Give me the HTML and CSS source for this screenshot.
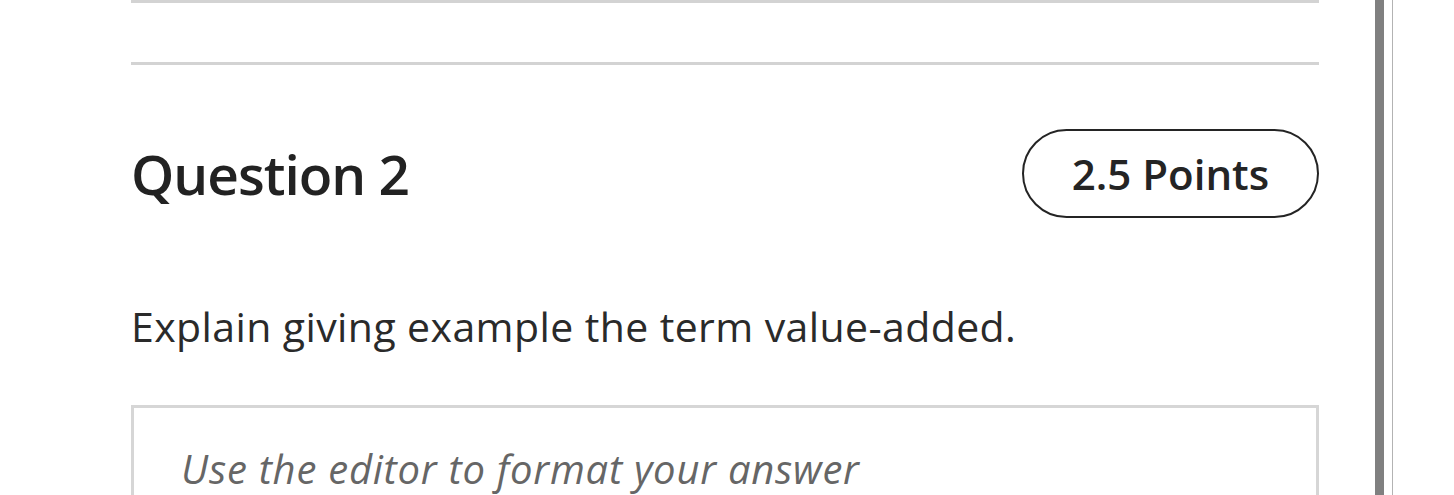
FILE: index.html
```html
<!DOCTYPE html>
<html lang="en">
<head>
<meta charset="utf-8">
<title>Question 2</title>
<link rel="stylesheet" href="styles.css">
</head>
<body>
<div class="page">
  <main class="quiz">
    <hr class="rule rule-top">
    <hr class="rule rule-section">
    <section class="question">
      <header class="question-header">
        <h2 class="question-title">Question 2</h2>
        <span class="points-pill">2.5 Points</span>
      </header>
      <p class="question-prompt">Explain giving example the term value-added.</p>
      <div class="answer-editor">
        <p class="answer-placeholder">Use the editor to format your answer</p>
      </div>
    </section>
  </main>
  <div class="scroll-track"></div>
  <div class="pane-edge"></div>
</div>
</body>
</html>
```

FILE: styles.css
```css
html, body {
  margin: 0;
  padding: 0;
  background: #ffffff;
  height: 100%;
  overflow: hidden;
}

body {
  font-family: "Open Sans", "Noto Sans", sans-serif;
  color: #262626;
}

.page {
  display: flex;
  align-items: stretch;
  min-height: 100vh;
}

.quiz {
  margin-left: 131px;
  width: 1188px;
  flex: 0 0 auto;
}

.rule {
  margin: 0;
  border: 0;
  height: 3px;
  background: #d3d3d3;
}

.rule-section {
  margin-top: 59px;
}

.question-header {
  margin-top: 64px;
  display: flex;
  align-items: center;
  justify-content: space-between;
}

.question-title {
  margin: 0;
  font-size: 55px;
  font-weight: 600;
  letter-spacing: -1px;
  color: #222222;
  line-height: normal;
}

.points-pill {
  box-sizing: border-box;
  height: 89px;
  width: 297px;
  border: 2px solid #242424;
  border-radius: 45px;
  display: flex;
  align-items: center;
  justify-content: center;
  font-size: 42px;
  font-weight: 600;
  color: #242424;
}

.question-prompt {
  margin: 80px 0 0;
  font-size: 41px;
  letter-spacing: 0.4px;
  line-height: 56px;
  color: #2a2a2a;
}

.answer-editor {
  margin-top: 51px;
  border: 3px solid #d6d6d6;
  min-height: 200px;
  padding: 35px 47px;
}

.answer-placeholder {
  margin: 0;
  font-size: 40px;
  letter-spacing: 0.75px;
  line-height: 52px;
  font-style: italic;
  color: #666666;
}

.scroll-track {
  margin-left: 56px;
  width: 9px;
  background: #808080;
  flex: 0 0 auto;
}

.pane-edge {
  margin-left: 8px;
  width: 1px;
  background: #b3b3b3;
  flex: 0 0 auto;
}
```
